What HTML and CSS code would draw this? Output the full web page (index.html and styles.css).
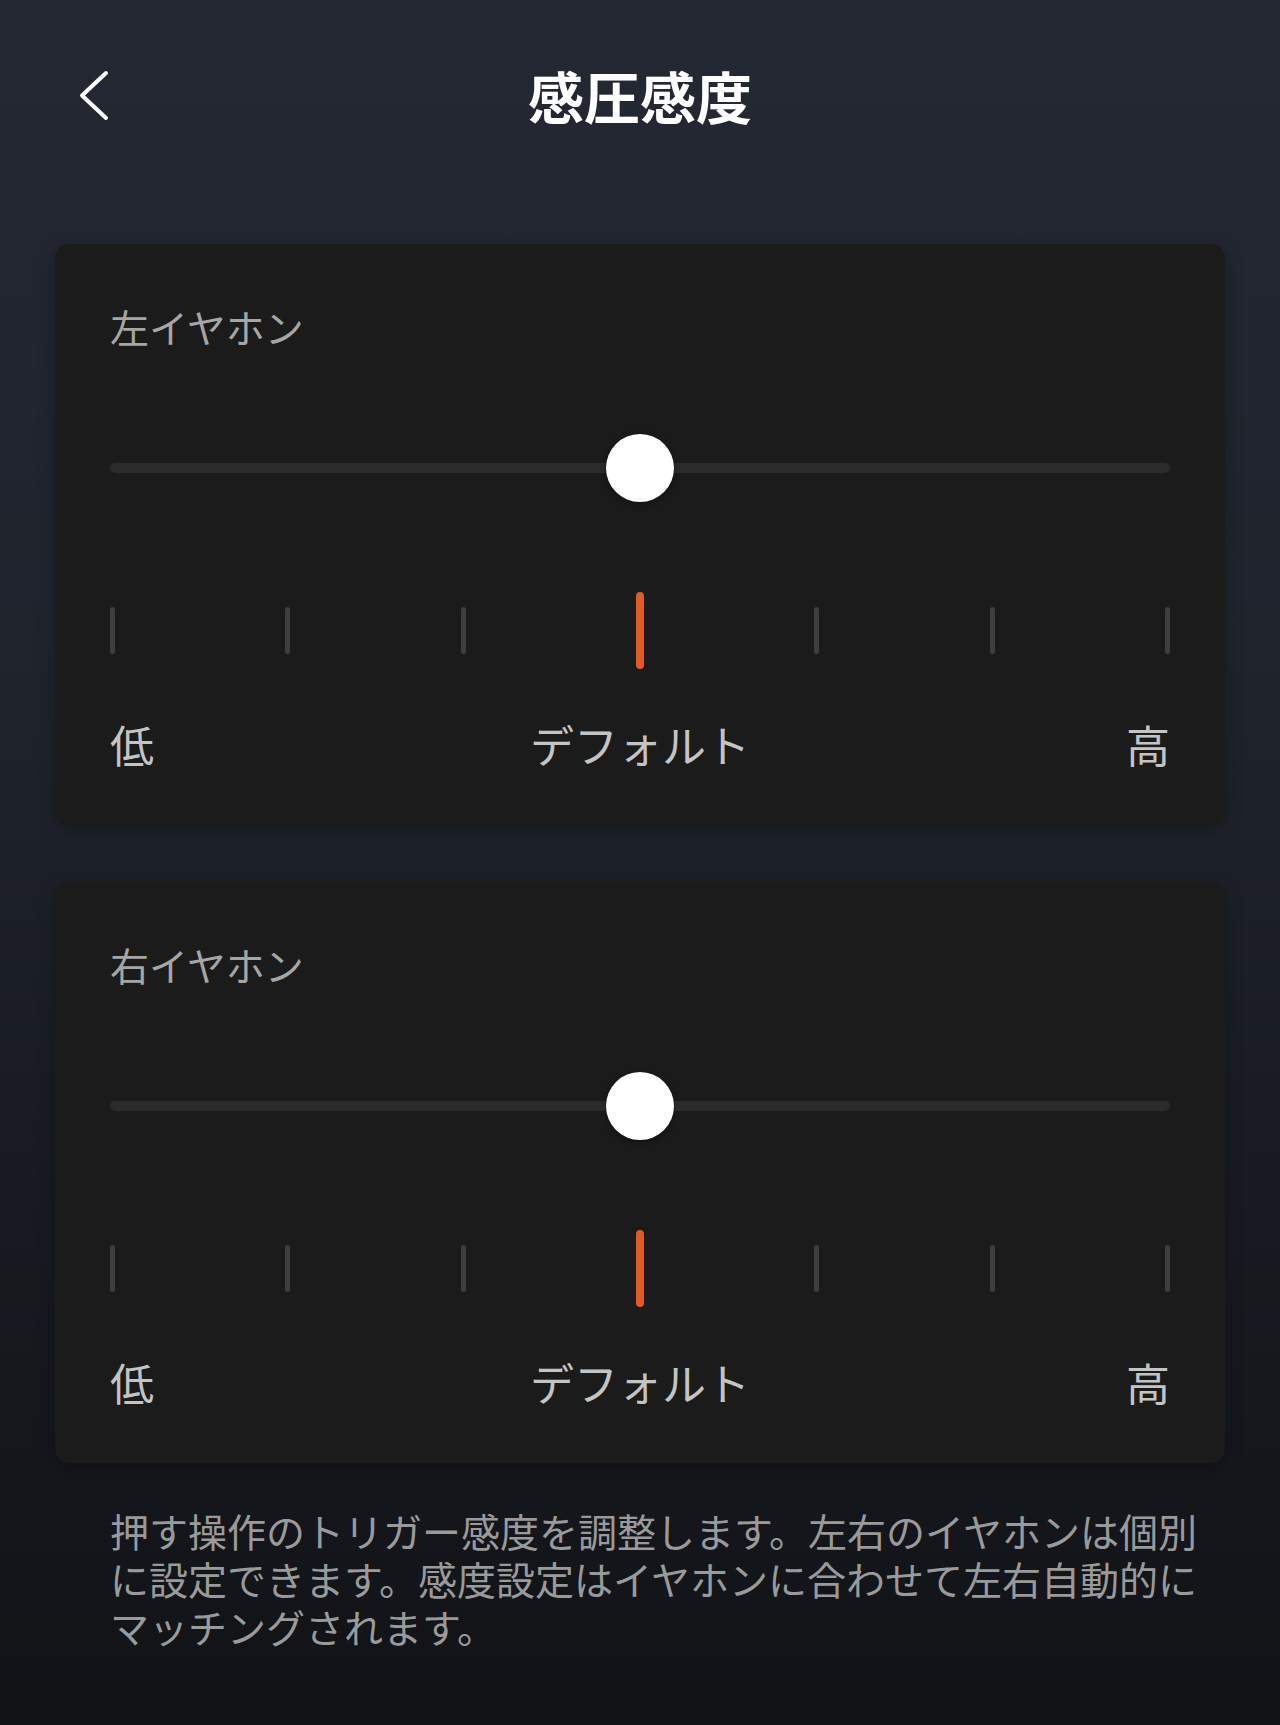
FILE: index.html
```html
<!DOCTYPE html>
<html lang="ja">
<head>
    <meta charset="UTF-8">
    <meta name="viewport" content="width=device-width, initial-scale=1.0">
    <title>感圧感度</title>
    <link rel="stylesheet" href="styles.css">
</head>
<body>
    <div class="page">
        <header class="header">
            <div class="back">
                <svg width="34" height="52" viewBox="0 0 34 52">
                    <path d="M28 3 L4 25.5 L28 48" fill="none" stroke="#ffffff" stroke-width="4" stroke-linecap="round" stroke-linejoin="round"/>
                </svg>
            </div>
            <h1 class="title">感圧感度</h1>
            <div></div>
        </header>

        <!-- Left earbud -->
        <section class="card">
            <div class="card-label">左イヤホン</div>
            <div class="slider">
                <div class="track"></div>
                <div class="thumb"></div>
            </div>
            <div class="ticks">
                <span class="tick"></span>
                <span class="tick"></span>
                <span class="tick"></span>
                <span class="tick active"></span>
                <span class="tick"></span>
                <span class="tick"></span>
                <span class="tick"></span>
            </div>
            <div class="scale">
                <span>低</span>
                <span>デフォルト</span>
                <span>高</span>
            </div>
        </section>

        <!-- Right earbud -->
        <section class="card">
            <div class="card-label">右イヤホン</div>
            <div class="slider">
                <div class="track"></div>
                <div class="thumb"></div>
            </div>
            <div class="ticks">
                <span class="tick"></span>
                <span class="tick"></span>
                <span class="tick"></span>
                <span class="tick active"></span>
                <span class="tick"></span>
                <span class="tick"></span>
                <span class="tick"></span>
            </div>
            <div class="scale">
                <span>低</span>
                <span>デフォルト</span>
                <span>高</span>
            </div>
        </section>

        <p class="note">押す操作のトリガー感度を調整します。左右のイヤホンは個別に設定できます。感度設定はイヤホンに合わせて左右自動的にマッチングされます。</p>
    </div>
</body>
</html>
```

FILE: styles.css
```css
html {
    background: #111317;
}

body {
    margin: 0;
    min-height: 1725px;
    font-family: "Noto Sans CJK JP", "Noto Sans", sans-serif;
    background: linear-gradient(180deg, #242833 0%, #1f232c 40%, #171a20 70%, #111317 100%);
    color: #ffffff;
}

.page {
    display: flex;
    flex-direction: column;
}

.header {
    display: grid;
    grid-template-columns: 1fr auto 1fr;
    align-items: center;
    height: 200px;
}

.back {
    display: flex;
    align-items: center;
    padding-left: 78px;
    margin-top: -8px;
}

.back svg {
    display: block;
}

.title {
    margin: 0;
    font-size: 56px;
    font-weight: 700;
    line-height: 1;
    margin-top: -10px;
    color: #ffffff;
}

.card {
    margin: 44px 55px 0;
    padding: 57px 55px 51px;
    background-color: #1b1b1b;
    border-radius: 14px;
    box-shadow: 0 4px 18px rgba(0, 0, 0, 0.25);
}

.card + .card {
    margin-top: 57px;
}

.card-label {
    font-size: 39px;
    line-height: 50px;
    color: #a6a6a6;
}

.slider {
    position: relative;
    display: flex;
    align-items: center;
    height: 68px;
    margin-top: 83px;
}

.track {
    flex: 1;
    height: 10px;
    border-radius: 5px;
    background-color: #2c2c2c;
}

.thumb {
    position: absolute;
    left: 50%;
    top: 0;
    width: 68px;
    height: 68px;
    margin-left: -34px;
    border-radius: 50%;
    background-color: #ffffff;
    box-shadow: 0 2px 6px rgba(0, 0, 0, 0.4);
}

.ticks {
    display: flex;
    justify-content: space-between;
    align-items: center;
    height: 77px;
    margin-top: 90px;
}

.tick {
    width: 5px;
    height: 47px;
    border-radius: 3px;
    background-color: #3e3e3e;
}

.tick.active {
    width: 8px;
    height: 77px;
    border-radius: 4px;
    background-color: #e05a24;
}

.scale {
    display: flex;
    justify-content: space-between;
    margin-top: 45px;
    font-size: 44px;
    line-height: 60px;
    color: #c4c4c4;
}

.note {
    margin: 43px 55px 0;
    padding-left: 55px;
    font-size: 39px;
    line-height: 48px;
    color: #9a9a9a;
}
```
